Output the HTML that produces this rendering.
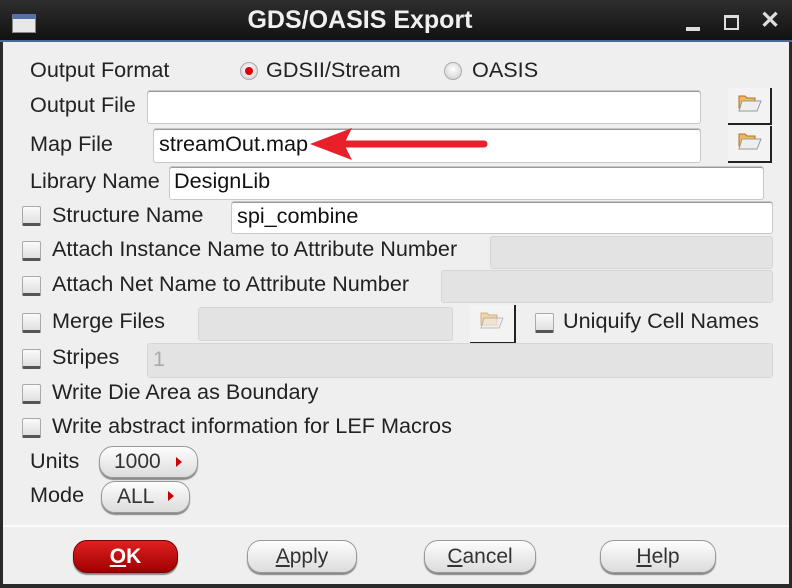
<!DOCTYPE html>
<html><head><meta charset="utf-8"><style>
*{margin:0;padding:0;box-sizing:border-box}
body{width:792px;height:588px;overflow:hidden;background:#2a2a2a;font-family:"Liberation Sans",sans-serif;position:relative}
.t{position:absolute;font-size:21px;color:#222;white-space:nowrap;line-height:22px;transform:scaleX(1.03);transform-origin:left center}
.in{position:absolute;background:#fff;border:1px solid #c8c8c8;border-radius:3px;box-shadow:inset 0 1px 0 #999}
.dis{position:absolute;background:#e3e3e3;border:1px solid #d6d6d6;border-radius:3px}
.cb{position:absolute;width:19px;height:20px;background:linear-gradient(#fafafa,#e0e0e0);border:1px solid #aaa;border-bottom:3px solid #555;border-radius:2px}
.fb{position:absolute;background:#f3f3f3;border-right:2px solid #222;border-bottom:2px solid #222}
.btn{position:absolute;border-radius:14px;background:linear-gradient(#fdfdfd,#dcdcdc);border:1px solid #999;box-shadow:0 2px 1px #888;font-size:21px;text-align:center;color:#333}
.rad{position:absolute;width:18px;height:18px;border-radius:50%;background:radial-gradient(circle at 50% 40%,#fff,#ccc);border:1px solid #aaa}
</style></head><body>
<div style="position:absolute;left:0;top:0;width:792px;height:41px;background:linear-gradient(#2e2e2e,#111)"></div>
<div style="position:absolute;left:12px;top:14px;width:24px;height:19px;background:#e8e8e8;border:1px solid #888;border-top-width:5px;border-top-color:#5470a8"></div>
<div style="position:absolute;left:0;top:6px;width:720px;text-align:center;color:#f0f0f0;font-weight:bold;font-size:25px">GDS/OASIS Export</div>
<div style="position:absolute;left:686px;top:27px;width:14px;height:4px;background:#ddd"></div>
<div style="position:absolute;left:724px;top:15px;width:15px;height:15px;border:2px solid #ddd;border-top-width:3px"></div>
<div style="position:absolute;left:760px;top:6px;color:#ddd;font-size:24px;font-weight:bold">✕</div>
<div style="position:absolute;left:0;top:40px;width:792px;height:2px;background:#4a6890"></div>
<div style="position:absolute;left:3px;top:42px;width:786px;height:542px;background:#efefef"></div>
<div style="position:absolute;left:3px;top:525px;width:786px;height:2px;background:#fafafa"></div>

<div class="t" style="left:30px;top:60px">Output Format</div>
<div class="rad" style="left:240px;top:62px"><div style="position:absolute;left:4px;top:4px;width:8px;height:8px;border-radius:50%;background:#d00"></div></div>
<div class="t" style="left:266px;top:60px">GDSII/Stream</div>
<div class="rad" style="left:444px;top:62px"></div>
<div class="t" style="left:472px;top:60px">OASIS</div>

<div class="t" style="left:30px;top:95px">Output File</div>
<div class="in" style="left:147px;top:90px;width:554px;height:34px"></div>
<div class="fb" style="left:728px;top:88px;width:44px;height:37px"></div>
<div class="t" style="left:30px;top:134px">Map File</div>
<div class="in" style="left:153px;top:128px;width:548px;height:35px"></div>
<div class="t" style="left:159px;top:134px;color:#111">streamOut.map</div>
<div class="fb" style="left:728px;top:126px;width:44px;height:37px"></div>

<div class="t" style="left:30px;top:171px">Library Name</div>
<div class="in" style="left:169px;top:166px;width:595px;height:34px"></div>
<div class="t" style="left:174px;top:171px;color:#111">DesignLib</div>

<div class="cb" style="left:22px;top:206px"></div>
<div class="t" style="left:52px;top:205px">Structure Name</div>
<div class="in" style="left:231px;top:201px;width:542px;height:33px"></div>
<div class="t" style="left:237px;top:206px;color:#111">spi_combine</div>

<div class="cb" style="left:22px;top:241px"></div>
<div class="t" style="left:52px;top:239px">Attach Instance Name to Attribute Number</div>
<div class="dis" style="left:490px;top:236px;width:283px;height:33px"></div>

<div class="cb" style="left:22px;top:276px"></div>
<div class="t" style="left:52px;top:274px">Attach Net Name to Attribute Number</div>
<div class="dis" style="left:441px;top:270px;width:332px;height:33px"></div>

<div class="cb" style="left:22px;top:313px"></div>
<div class="t" style="left:52px;top:311px">Merge Files</div>
<div class="dis" style="left:198px;top:307px;width:255px;height:34px"></div>
<div class="fb" style="left:470px;top:305px;width:46px;height:39px"></div>
<div class="cb" style="left:535px;top:313px"></div>
<div class="t" style="left:563px;top:311px">Uniquify Cell Names</div>

<div class="cb" style="left:22px;top:349px"></div>
<div class="t" style="left:52px;top:347px">Stripes</div>
<div class="dis" style="left:147px;top:343px;width:626px;height:35px"></div>
<div class="t" style="left:153px;top:349px;color:#aaa">1</div>

<div class="cb" style="left:22px;top:384px"></div>
<div class="t" style="left:52px;top:382px">Write Die Area as Boundary</div>
<div class="cb" style="left:22px;top:418px"></div>
<div class="t" style="left:52px;top:416px">Write abstract information for LEF Macros</div>

<div class="t" style="left:30px;top:451px">Units</div>
<div class="btn" style="left:99px;top:446px;width:99px;height:32px;text-align:left;padding-left:14px;line-height:30px">1000</div>
<div class="t" style="left:30px;top:485px">Mode</div>
<div class="btn" style="left:101px;top:481px;width:89px;height:32px;text-align:left;padding-left:15px;line-height:30px">ALL</div>

<div class="btn" style="left:73px;top:540px;width:105px;height:33px;line-height:31px;background:linear-gradient(#e02020,#a00000);border-color:#700;color:#fff;font-weight:bold"><u>O</u>K</div>
<div class="btn" style="left:247px;top:540px;width:110px;height:33px;line-height:31px"><u>A</u>pply</div>
<div class="btn" style="left:424px;top:540px;width:112px;height:33px;line-height:31px"><u>C</u>ancel</div>
<div class="btn" style="left:600px;top:540px;width:116px;height:33px;line-height:31px"><u>H</u>elp</div>

<svg style="position:absolute;left:0;top:0" width="792" height="588">
<g fill="#f0b860" stroke="#b07020" stroke-width="1"><path d="M739 96h6l2 2h8v10h-16z"/><path d="M739 134h6l2 2h8v10h-16z"/><path d="M481 313h6l2 2h8v10h-16z" opacity=".5"/></g>
<g fill="#eee" stroke="#999"><path d="M742 101h19l-4 10h-18z"/><path d="M742 139h19l-4 10h-18z"/><path d="M484 318h19l-4 10h-18z" opacity=".6"/></g>
<line x1="340" y1="144" x2="484" y2="144" stroke="#e8202a" stroke-width="7" stroke-linecap="round"/>
<path d="M310 144L352 128L344 144L352 160Z" fill="#e8202a"/>
<path d="M176 457l6 5-6 5z M168 491l6 5-6 5z" fill="#c00"/>
</svg>
</body></html>
